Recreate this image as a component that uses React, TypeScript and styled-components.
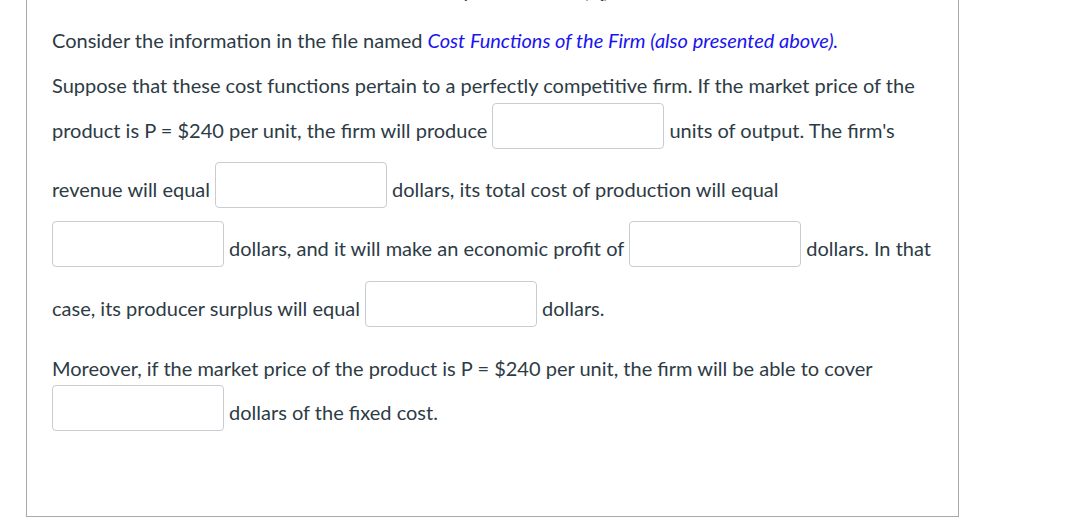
import styled, { createGlobalStyle } from "styled-components";

const GlobalStyle = createGlobalStyle`
  html, body {
    margin: 0;
    padding: 0;
    background: #ffffff;
    overflow: hidden;
  }
  body {
    font-family: Lato, "Open Sans", "Liberation Sans", sans-serif;
    color: #2d3b45;
  }
`;

const Page = styled.div`
  width: 1082px;
  height: 526px;
  overflow: hidden;
`;

const Panel = styled.section`
  box-sizing: border-box;
  margin: -44px 0 0 26px;
  width: 933px;
  border: 1px solid #a9a9a9;
  padding: 21px 0 78px 25px;
  font-size: 20px;
`;

const Caption = styled.div`
  height: 25px;
  line-height: 25px;
  padding-left: 366px;
  color: #2d3b45;
  white-space: nowrap;
`;

const Paragraph = styled.div<{ $top: number }>`
  display: flex;
  flex-direction: column;
  margin-top: ${(p) => p.$top}px;
`;

const Line = styled.div<{ $h?: number }>`
  display: flex;
  align-items: center;
  gap: 5px;
  height: ${(p) => p.$h ?? 25}px;
  line-height: 25px;
  white-space: nowrap;
`;

const Words = styled.span<{ $drop?: number }>`
  padding-top: ${(p) => p.$drop ?? 9}px;
`;

const Link = styled.a`
  color: #1a14f0;
  font-style: italic;
  text-decoration: none;
`;

const Blank = styled.input.attrs({ type: "text" })`
  box-sizing: border-box;
  width: 172px;
  height: 46px;
  margin: 0;
  padding: 4px 8px;
  border: 1px solid #c7cdd1;
  border-radius: 4px;
  background: #ffffff;
  font: inherit;
  color: #2d3b45;
  outline: none;
`;

export default function App() {
  return (
    <Page>
      <GlobalStyle />
      <Panel>
        <Caption>Cost per Unit Sold (Q)</Caption>
        <Paragraph $top={23}>
          <Line>
            <Words $drop={4}>
              Consider the information in the file named{" "}
              <Link href="#">Cost Functions of the Firm (also presented above).</Link>
            </Words>
          </Line>
        </Paragraph>
        <Paragraph $top={20}>
          <Line>
            <Words $drop={4}>
              Suppose that these cost functions pertain to a perfectly competitive firm. If the market price of the
            </Words>
          </Line>
          <Line $h={59}>
            <Words>product is P = $240 per unit, the firm will produce</Words>
            <Blank aria-label="units of output" />
            <Words>units of output. The firm's</Words>
          </Line>
          <Line $h={59}>
            <Words>revenue will equal</Words>
            <Blank aria-label="revenue" />
            <Words>dollars, its total cost of production will equal</Words>
          </Line>
          <Line $h={60}>
            <Blank aria-label="total cost" />
            <Words>dollars, and it will make an economic profit of</Words>
            <Blank aria-label="economic profit" />
            <Words>dollars. In that</Words>
          </Line>
          <Line $h={59}>
            <Words>case, its producer surplus will equal</Words>
            <Blank aria-label="producer surplus" />
            <Words>dollars.</Words>
          </Line>
        </Paragraph>
        <Paragraph $top={21}>
          <Line $h={24}>
            <Words $drop={4}>
              Moreover, if the market price of the product is P = $240 per unit, the firm will be able to cover
            </Words>
          </Line>
          <Line $h={60}>
            <Blank aria-label="fixed cost covered" />
            <Words>dollars of the fixed cost.</Words>
          </Line>
        </Paragraph>
      </Panel>
    </Page>
  );
}
